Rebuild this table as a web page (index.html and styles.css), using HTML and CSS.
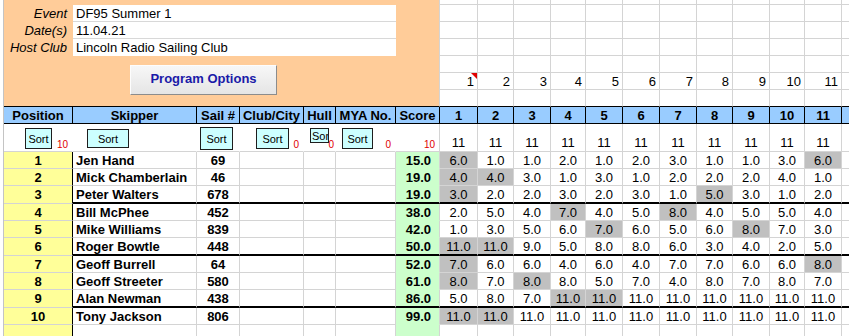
FILE: index.html
```html
<!DOCTYPE html>
<html>
<head>
<meta charset="utf-8">
<title>DF95 Summer 1 - Results</title>
<link rel="stylesheet" href="styles.css">
</head>
<body>
<div class="sheet">
  <div class="gutter"></div>
  <div class="panel">
    <div class="fields">
      <div class="lbl">Event</div><div class="val">DF95 Summer 1</div>
      <div class="lbl">Date(s)</div><div class="val">11.04.21</div>
      <div class="lbl">Host Club</div><div class="val last">Lincoln Radio Sailing Club</div>
    </div>
    <button class="prog">Program Options</button>
  </div>

  <div class="row"><div class="c"></div><div class="c"></div><div class="c"></div><div class="c"></div><div class="c"></div><div class="c"></div><div class="c"></div><div class="c"></div><div class="c"></div><div class="c"></div><div class="c"></div><div class="c"></div></div>
  <div class="row"><div class="c"></div><div class="c"></div><div class="c"></div><div class="c"></div><div class="c"></div><div class="c"></div><div class="c"></div><div class="c"></div><div class="c"></div><div class="c"></div><div class="c"></div><div class="c"></div></div>
  <div class="row"><div class="c"></div><div class="c"></div><div class="c"></div><div class="c"></div><div class="c"></div><div class="c"></div><div class="c"></div><div class="c"></div><div class="c"></div><div class="c"></div><div class="c"></div><div class="c"></div></div>
  <div class="row"><div class="c"></div><div class="c"></div><div class="c"></div><div class="c"></div><div class="c"></div><div class="c"></div><div class="c"></div><div class="c"></div><div class="c"></div><div class="c"></div><div class="c"></div><div class="c"></div></div>
  <div class="row"><div class="c"></div><div class="c"></div><div class="c"></div><div class="c"></div><div class="c"></div><div class="c"></div><div class="c"></div><div class="c"></div><div class="c"></div><div class="c"></div><div class="c"></div><div class="c"></div></div>
  <div class="row"><div class="c n note">1</div><div class="c n">2</div><div class="c n">3</div><div class="c n">4</div><div class="c n">5</div><div class="c n">6</div><div class="c n">7</div><div class="c n">8</div><div class="c n">9</div><div class="c n">10</div><div class="c n">11</div><div class="c"></div></div>
  <div class="row r6"><div class="c"></div><div class="c"></div><div class="c"></div><div class="c"></div><div class="c"></div><div class="c"></div><div class="c"></div><div class="c"></div><div class="c"></div><div class="c"></div><div class="c"></div><div class="c"></div></div>

  <div class="row hdr">
    <div class="c">Position</div><div class="c">Skipper</div><div class="c">Sail #</div><div class="c">Club/City</div><div class="c">Hull</div><div class="c">MYA No.</div><div class="c">Score</div>
    <div class="c">1</div><div class="c">2</div><div class="c">3</div><div class="c">4</div><div class="c">5</div><div class="c">6</div><div class="c">7</div><div class="c">8</div><div class="c">9</div><div class="c">10</div><div class="c">11</div><div class="c"></div>
  </div>

  <div class="row srt">
    <div class="c nb"><span class="rn">10</span><button class="sort s-pos">Sort</button></div>
    <div class="c nb"><button class="sort s-skip">Sort</button></div>
    <div class="c nb"><button class="sort s-sail">Sort</button></div>
    <div class="c nb"><span class="rn">0</span><button class="sort s-club">Sort</button></div>
    <div class="c nb"><span class="rn rn-hull">0</span><button class="sort s-hull">Sort</button></div>
    <div class="c nb"><span class="rn">0</span><button class="sort s-mya">Sort</button></div>
    <div class="c"><span class="rn">10</span></div>
    <div class="c"><span class="cnt">11</span></div><div class="c"><span class="cnt">11</span></div><div class="c"><span class="cnt">11</span></div><div class="c"><span class="cnt">11</span></div><div class="c"><span class="cnt">11</span></div><div class="c"><span class="cnt">11</span></div><div class="c"><span class="cnt">11</span></div><div class="c"><span class="cnt">11</span></div><div class="c"><span class="cnt">11</span></div><div class="c"><span class="cnt">11</span></div><div class="c"><span class="cnt">11</span></div>
    <div class="c"></div>
  </div>

  <div class="row">
    <div class="c pos">1</div><div class="c nm">Jen Hand</div><div class="c sl">69</div><div class="c"></div><div class="c"></div><div class="c"></div><div class="c sc">15.0</div>
    <div class="c v d">6.0</div><div class="c v">1.0</div><div class="c v">1.0</div><div class="c v">2.0</div><div class="c v">1.0</div><div class="c v">2.0</div><div class="c v">3.0</div><div class="c v">1.0</div><div class="c v">1.0</div><div class="c v">3.0</div><div class="c v d">6.0</div><div class="c"></div>
  </div>
  <div class="row">
    <div class="c pos">2</div><div class="c nm">Mick Chamberlain</div><div class="c sl">46</div><div class="c"></div><div class="c"></div><div class="c"></div><div class="c sc">19.0</div>
    <div class="c v d">4.0</div><div class="c v d">4.0</div><div class="c v">3.0</div><div class="c v">1.0</div><div class="c v">3.0</div><div class="c v">1.0</div><div class="c v">2.0</div><div class="c v">2.0</div><div class="c v">2.0</div><div class="c v">4.0</div><div class="c v">1.0</div><div class="c"></div>
  </div>
  <div class="row thick">
    <div class="c pos">3</div><div class="c nm">Peter Walters</div><div class="c sl">678</div><div class="c"></div><div class="c"></div><div class="c"></div><div class="c sc">19.0</div>
    <div class="c v d">3.0</div><div class="c v">2.0</div><div class="c v">2.0</div><div class="c v">3.0</div><div class="c v">2.0</div><div class="c v">3.0</div><div class="c v">1.0</div><div class="c v d">5.0</div><div class="c v">3.0</div><div class="c v">1.0</div><div class="c v">2.0</div><div class="c"></div>
  </div>
  <div class="row">
    <div class="c pos">4</div><div class="c nm">Bill McPhee</div><div class="c sl">452</div><div class="c"></div><div class="c"></div><div class="c"></div><div class="c sc">38.0</div>
    <div class="c v">2.0</div><div class="c v">5.0</div><div class="c v">4.0</div><div class="c v d">7.0</div><div class="c v">4.0</div><div class="c v">5.0</div><div class="c v d">8.0</div><div class="c v">4.0</div><div class="c v">5.0</div><div class="c v">5.0</div><div class="c v">4.0</div><div class="c"></div>
  </div>
  <div class="row">
    <div class="c pos">5</div><div class="c nm">Mike Williams</div><div class="c sl">839</div><div class="c"></div><div class="c"></div><div class="c"></div><div class="c sc">42.0</div>
    <div class="c v">1.0</div><div class="c v">3.0</div><div class="c v">5.0</div><div class="c v">6.0</div><div class="c v d">7.0</div><div class="c v">6.0</div><div class="c v">5.0</div><div class="c v">6.0</div><div class="c v d">8.0</div><div class="c v">7.0</div><div class="c v">3.0</div><div class="c"></div>
  </div>
  <div class="row thick">
    <div class="c pos">6</div><div class="c nm">Roger Bowtle</div><div class="c sl">448</div><div class="c"></div><div class="c"></div><div class="c"></div><div class="c sc">50.0</div>
    <div class="c v d">11.0</div><div class="c v d">11.0</div><div class="c v">9.0</div><div class="c v">5.0</div><div class="c v">8.0</div><div class="c v">8.0</div><div class="c v">6.0</div><div class="c v">3.0</div><div class="c v">4.0</div><div class="c v">2.0</div><div class="c v">5.0</div><div class="c"></div>
  </div>
  <div class="row">
    <div class="c pos">7</div><div class="c nm">Geoff Burrell</div><div class="c sl">64</div><div class="c"></div><div class="c"></div><div class="c"></div><div class="c sc">52.0</div>
    <div class="c v d">7.0</div><div class="c v">6.0</div><div class="c v">6.0</div><div class="c v">4.0</div><div class="c v">6.0</div><div class="c v">4.0</div><div class="c v">7.0</div><div class="c v">7.0</div><div class="c v">6.0</div><div class="c v">6.0</div><div class="c v d">8.0</div><div class="c"></div>
  </div>
  <div class="row">
    <div class="c pos">8</div><div class="c nm">Geoff Streeter</div><div class="c sl">580</div><div class="c"></div><div class="c"></div><div class="c"></div><div class="c sc">61.0</div>
    <div class="c v d">8.0</div><div class="c v">7.0</div><div class="c v d">8.0</div><div class="c v">8.0</div><div class="c v">5.0</div><div class="c v">7.0</div><div class="c v">4.0</div><div class="c v">8.0</div><div class="c v">7.0</div><div class="c v">8.0</div><div class="c v">7.0</div><div class="c"></div>
  </div>
  <div class="row thick">
    <div class="c pos">9</div><div class="c nm">Alan Newman</div><div class="c sl">438</div><div class="c"></div><div class="c"></div><div class="c"></div><div class="c sc">86.0</div>
    <div class="c v">5.0</div><div class="c v">8.0</div><div class="c v">7.0</div><div class="c v d">11.0</div><div class="c v d">11.0</div><div class="c v">11.0</div><div class="c v">11.0</div><div class="c v">11.0</div><div class="c v">11.0</div><div class="c v">11.0</div><div class="c v">11.0</div><div class="c"></div>
  </div>
  <div class="row">
    <div class="c pos">10</div><div class="c nm">Tony Jackson</div><div class="c sl">806</div><div class="c"></div><div class="c"></div><div class="c"></div><div class="c sc">99.0</div>
    <div class="c v d">11.0</div><div class="c v d">11.0</div><div class="c v">11.0</div><div class="c v">11.0</div><div class="c v">11.0</div><div class="c v">11.0</div><div class="c v">11.0</div><div class="c v">11.0</div><div class="c v">11.0</div><div class="c v">11.0</div><div class="c v">11.0</div><div class="c"></div>
  </div>
  <div class="row">
    <div class="c pos"></div><div class="c"></div><div class="c"></div><div class="c"></div><div class="c"></div><div class="c"></div><div class="c sc"></div>
    <div class="c"></div><div class="c"></div><div class="c"></div><div class="c"></div><div class="c"></div><div class="c"></div><div class="c"></div><div class="c"></div><div class="c"></div><div class="c"></div><div class="c"></div><div class="c"></div>
  </div>
</div>
</body>
</html>
```
FILE: styles.css
```css
html, body {
  margin: 0;
  padding: 0;
  overflow: hidden;
  background: #fff;
}
body {
  font: 13px/17px "Liberation Sans", Arial, sans-serif;
  color: #000;
}
.sheet {
  display: grid;
  grid-template-columns: 4px 69px 124px 43px 64px 32px 60px 44px 38px 36px 37px 35px 37px 37px 37px 36px 37px 35px 37px 40px;
  grid-template-rows: 5px repeat(6, 17px) 17px 28px 17px 17px 18px 17px 17px 18px 17px 17px 18px 17px 17px;
  width: 882px;
}
.row { display: contents; }

.c {
  box-sizing: border-box;
  border-right: 1px solid #d4d4d4;
  border-bottom: 1px solid #d4d4d4;
  overflow: hidden;
  white-space: nowrap;
  min-width: 0;
}
.gutter {
  grid-column: 1;
  grid-row: 1 / -1;
  border-right: 1px solid #c4c4c4;
}

/* top panel */
.panel {
  grid-column: 2 / 9;
  grid-row: 1 / 8;
  box-sizing: border-box;
  background: #ffcc99;
  border-right: 1px solid #d4d4d4;
  border-bottom: 1px solid #000;
  padding-top: 5px;
}
.fields {
  display: grid;
  grid-template-columns: 69px 323px;
  grid-auto-rows: 17px;
}
.lbl {
  font-style: italic;
  text-align: right;
  padding-right: 6px;
  white-space: nowrap;
}
.val {
  background: #fff;
  padding-left: 3px;
  border-bottom: 1px solid #d8d8d8;
  white-space: nowrap;
}
.val.last { border-bottom: none; }
.prog {
  display: block;
  box-sizing: border-box;
  margin: 9px 0 0 126px;
  width: 147px;
  height: 30px;
  padding: 0 0 4px;
  background: linear-gradient(#f7f7f7, #e5e5e5);
  border: 1px solid;
  border-color: #fdfdfd #8c8c8c #8c8c8c #fdfdfd;
  font: bold 13px "Liberation Sans", Arial, sans-serif;
  color: #1a1aa8;
}

/* race number row above header */
.n { text-align: right; padding-right: 3px; }
.note { position: relative; }
.note::after {
  content: "";
  position: absolute;
  top: 0;
  right: 0;
  border-top: 6px solid #e00000;
  border-left: 6px solid transparent;
}
.r6 > .c { border-bottom-color: #000; }

/* header */
.hdr > .c {
  background: #99ccff;
  border-right-color: #000;
  border-bottom-color: #000;
  font-weight: bold;
  text-align: center;
}

/* sort row */
.srt > .c { display: grid; }
.srt > .c > * { grid-area: 1 / 1; }
.nb { border-right-color: transparent; }
.rn {
  justify-self: end;
  align-self: end;
  color: #e00000;
  font-size: 10px;
  line-height: 12px;
  padding-right: 4px;
}
.rn-hull { padding-right: 1px; }
.cnt {
  justify-self: center;
  align-self: end;
  line-height: 15px;
  padding-bottom: 1px;
}
.sort {
  justify-self: start;
  align-self: start;
  box-sizing: border-box;
  margin: 0;
  padding: 0;
  background: #ccffff;
  border: 1px solid #1e1e1e;
  font: 11px "Liberation Sans", Arial, sans-serif;
  color: #000;
  text-align: center;
  overflow: hidden;
  white-space: nowrap;
}
.s-pos  { margin: 4px 0 0 21px; width: 27px; height: 21px; }
.s-skip { margin: 5px 0 0 14px; width: 42px; height: 19px; }
.s-sail { margin: 3px 0 0 3px;  width: 33px; height: 23px; }
.s-club { margin: 4px 0 0 16px; width: 33px; height: 21px; }
.s-hull { margin: 4px 0 0 6px;  width: 19px; height: 15px; text-align: left; padding-left: 1px; }
.s-mya  { margin: 4px 0 0 6px;  width: 31px; height: 21px; }

/* data */
.pos {
  background: #ffff99;
  font-weight: bold;
  text-align: center;
  border-right-color: #000;
}
.nm { font-weight: bold; padding-left: 3px; }
.sl { font-weight: bold; text-align: center; }
.sc {
  background: #ccffcc;
  font-weight: bold;
  text-align: right;
  padding-right: 8px;
  border-bottom-color: #ccffcc;
}
.v { text-align: center; }
.d { background: #c0c0c0; }

.thick > .c { border-bottom: 2px solid #000; }
.thick > .pos { border-bottom: 1px solid #d4d4d4; }
```
